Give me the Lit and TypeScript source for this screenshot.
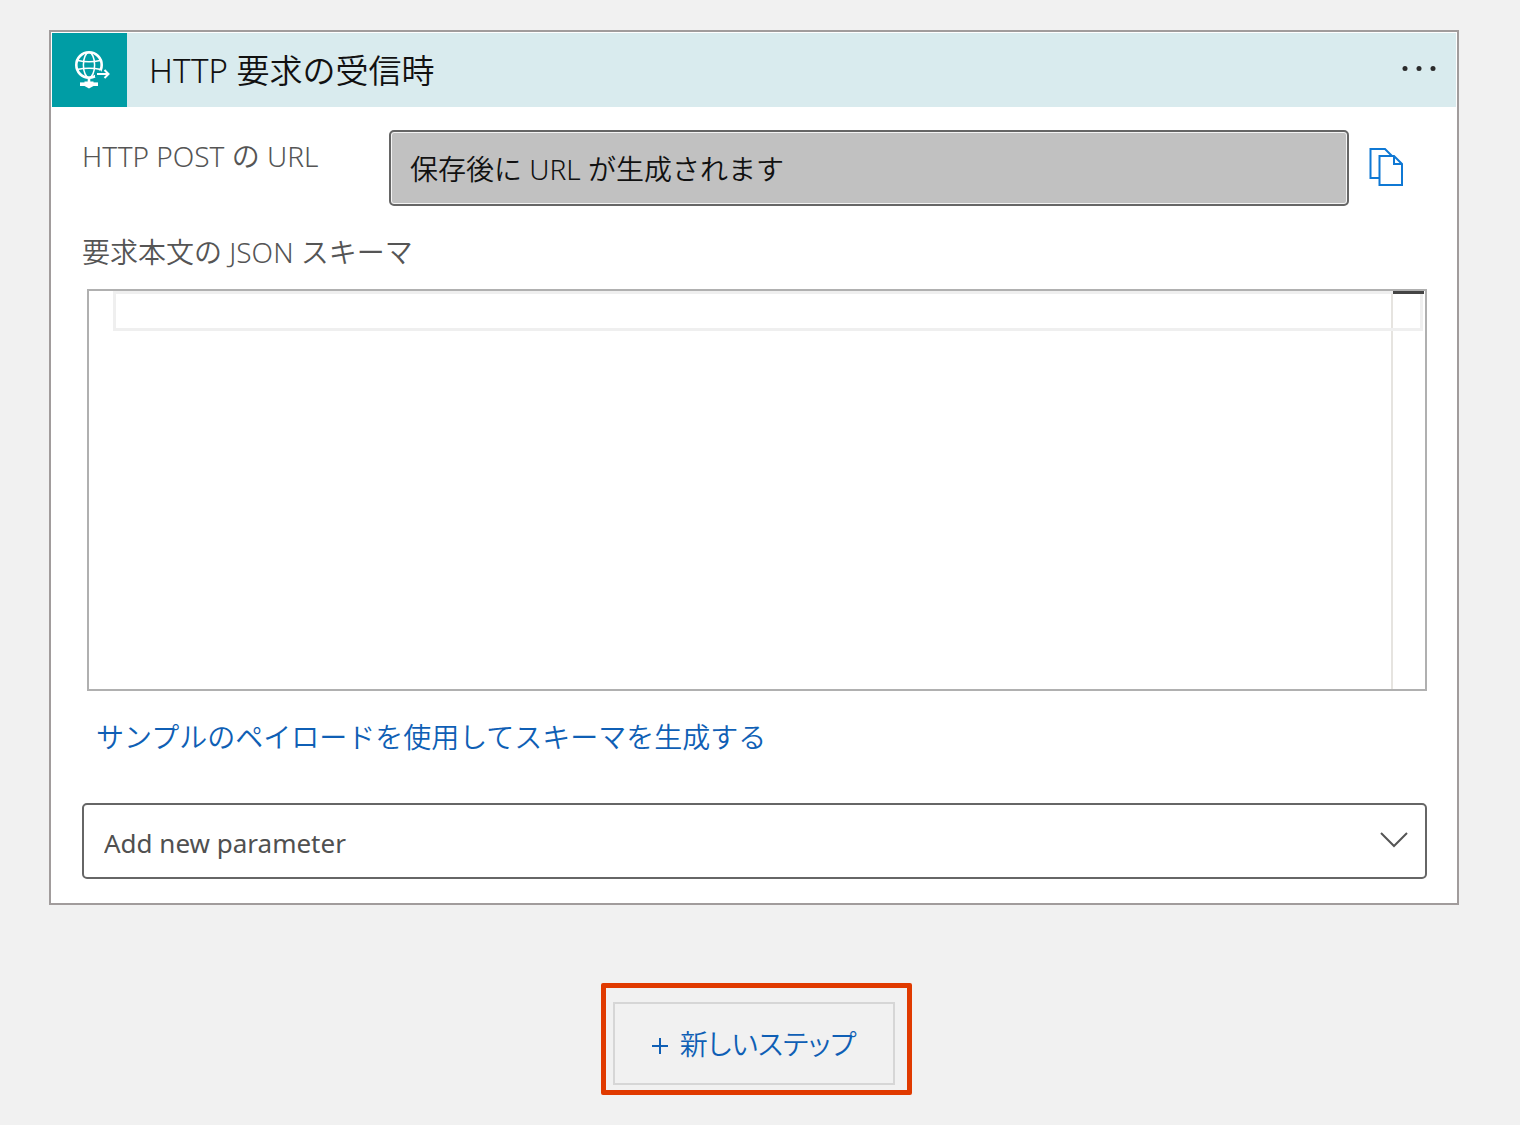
import { LitElement, html, css } from "lit";
import { customElement, state } from "lit/decorators.js";

@customElement("app-root")
export class AppRoot extends LitElement {
  static styles = css`
    :host {
      display: block;
      box-sizing: border-box;
      min-height: 100vh;
      padding: 30px 61px 30px 49px;
      background: #f1f1f1;
      color: #555;
      font-family: "Noto Sans", "Noto Sans CJK JP", sans-serif;
      font-size: 28px;
      font-weight: 350;
      line-height: 40px;
    }
    *, *::before, *::after { box-sizing: border-box; }
    button, input, select, textarea { font: inherit; margin: 0; }
    button { padding: 0; border: 0; background: none; cursor: pointer; }
    svg { display: block; }

    .card {
      border: 2px solid #a19c9c;
      padding: 1px;
      background: #fff;
    }
    .header {
      display: flex;
      align-items: center;
      height: 74px;
      background: #d9ebee;
    }
    .brand {
      display: flex;
      align-items: center;
      justify-content: center;
      align-self: stretch;
      width: 75px;
      padding-left: 4px;
      background: #009da5;
    }
    .title {
      flex: 1;
      margin: 0;
      padding: 2px 0 0 22px;
      color: #111;
      font-size: 33px;
      font-weight: inherit;
    }
    .more { padding: 0 18px; }

    .body { padding: 23px 29px 23px 30px; }
    .url-row { display: flex; align-items: flex-start; }
    .label { color: #555; }
    .url-label { width: 307px; padding-top: 6px; }
    .url-input {
      flex: 1;
      min-width: 0;
      height: 76px;
      padding: 0 19px;
      border: 2px solid #666;
      border-radius: 5px;
      background: #c1c1c1;
      box-shadow: inset 0 0 0 1px #f4f4f4;
      color: #111;
    }
    .copy { margin: 17px 23px 0 20px; }
    .schema-label { display: block; margin-top: 26px; }

    .editor {
      position: relative;
      display: flex;
      height: 402px;
      margin: 17px 0 0 5px;
      border: 2px solid #b0b0b0;
    }
    .code {
      flex: 1;
      min-width: 0;
      padding: 0 8px 0 28px;
      border: 0;
      outline: 0;
      resize: none;
      background: transparent;
      color: #333;
    }
    .ruler {
      width: 34px;
      border-left: 2px solid #e6e4e0;
    }
    .thumb {
      position: relative;
      z-index: 1;
      height: 3px;
      margin-right: 1px;
      background: #444;
    }
    .current-line {
      position: absolute;
      top: 0;
      left: 24px;
      right: 2px;
      height: 40px;
      border: 3px solid #efefef;
      pointer-events: none;
    }
    .sample {
      display: inline-block;
      margin: 26px 0 0 14px;
      color: #0f5fb5;
      text-decoration: none;
    }
    .select-wrap {
      display: grid;
      align-items: center;
      margin-top: 46px;
    }
    .select-wrap > * { grid-area: 1 / 1; }
    .select {
      appearance: none;
      width: 100%;
      height: 76px;
      padding: 4px 60px 0 20px;
      border: 2px solid #666;
      border-radius: 5px;
      background: #fff;
      color: #505050;
      font-size: 26px;
      font-weight: 400;
    }
    .chevron {
      justify-self: end;
      margin-right: 19px;
      pointer-events: none;
    }

    .footer {
      display: flex;
      justify-content: center;
      padding: 78px 0 0 5px;
    }
    .highlight {
      padding: 14px 12px 5px 7px;
      border: 5px solid #e03a00;
      border-radius: 2px;
    }
    .new-step {
      display: flex;
      align-items: center;
      justify-content: center;
      gap: 12px;
      width: 282px;
      height: 83px;
      border: 2px solid #d6d6d6;
      color: #0f5fb5;
      font-feature-settings: "palt";
      white-space: nowrap;
    }
  `;

  @state() private schema = "";

  private onSchema(e: Event) {
    this.schema = (e.target as HTMLTextAreaElement).value;
  }

  render() {
    return html`
      <section class="card">
        <header class="header">
          <span class="brand">
            <svg width="38" height="40" viewBox="0 0 38 40" fill="none" stroke="#fff" aria-hidden="true">
              <circle cx="16" cy="15" r="12.7" stroke-width="2.6" />
              <ellipse cx="16" cy="15" rx="5.6" ry="12.5" stroke-width="1.5" />
              <path d="M5 10.5Q16 13 27 10.5M4 19.5Q16 17 28 19.5" stroke-width="1.5" />
              <path d="M22 20.500h6v7h-6z" fill="#009da5" stroke="none" />
              <path d="M24 24h11M31.5 20l4 4-4 4" stroke-width="2" />
              <path d="M16 27v5" stroke-width="2.6" />
              <path d="M7 34.2h18" stroke-width="3.6" />
              <path d="M11.5 31.5h9v4.5l-4.5 2.6-4.5-2.6z" fill="#fff" stroke="none" />
            </svg>
          </span>
          <h1 class="title">HTTP 要求の受信時</h1>
          <button class="more" aria-label="メニュー">
            <svg width="38" height="10" viewBox="0 0 38 10" fill="#2b2b2b">
              <circle cx="5" cy="3.500" r="2.5" /><circle cx="19" cy="3.500" r="2.5" /><circle cx="33" cy="3.500" r="2.5" />
            </svg>
          </button>
        </header>

        <div class="body">
          <div class="url-row">
            <label class="label url-label" for="url">HTTP POST の URL</label>
            <input class="url-input" id="url" type="text" readonly value="保存後に URL が生成されます" />
            <button class="copy" aria-label="コピー">
              <svg width="35" height="40" viewBox="0 0 35 40" fill="none" stroke="#0f78d4" stroke-width="2">
                <path d="M10 31H1.5V2H16l7 7" />
                <path d="M10.500 9H25l8 8V38H10.500z" />
                <path d="M25 9v8h8" />
              </svg>
            </button>
          </div>

          <label class="label schema-label" for="schema">要求本文の JSON スキーマ</label>
          <div class="editor">
            <textarea class="code" id="schema" spellcheck="false" .value=${this.schema} @input=${this.onSchema}></textarea>
            <div class="ruler"><div class="thumb"></div></div>
            <div class="current-line"></div>
          </div>

          <a class="sample" href="#sample">サンプルのペイロードを使用してスキーマを生成する</a>

          <div class="select-wrap">
            <select class="select" aria-label="Add new parameter">
              <option>Add new parameter</option>
            </select>
            <svg class="chevron" width="28" height="20" viewBox="0 0 28 20" fill="none" stroke="#555" stroke-width="2">
              <path d="M1 2l13 13L27 2" />
            </svg>
          </div>
        </div>
      </section>

      <footer class="footer">
        <div class="highlight">
          <button class="new-step">
            <svg width="16" height="20" viewBox="0 0 16 20" stroke="currentColor" stroke-width="2" aria-hidden="true">
              <path d="M8 4v16M0 12h16" />
            </svg>
            <span>新しいステップ</span>
          </button>
        </div>
      </footer>
    `;
  }
}
